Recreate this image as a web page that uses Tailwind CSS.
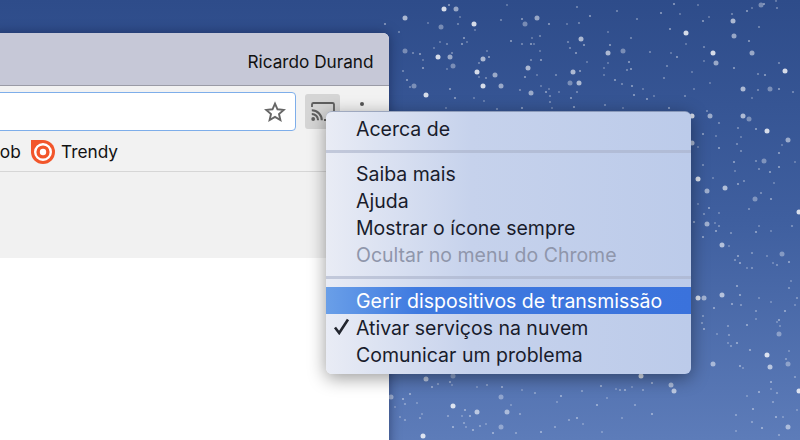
<!DOCTYPE html>
<html lang="en">
<head>
  <meta charset="UTF-8">
  <title>Cast menu</title>
  <script src="https://cdn.jsdelivr.net/npm/@tailwindcss/browser@4"></script>
</head>
<body class="font-['Inter','Liberation_Sans',sans-serif]">
  <div class="relative w-[800px] h-[440px] overflow-hidden bg-gradient-to-b from-[#2e4c8a] via-[#3f5f9f] to-[#5d7cb9]">
    <!-- wallpaper stars -->
    <svg id="stars" class="absolute inset-0 blur-[0.6px]" width="800" height="440"></svg>

    <!-- browser window -->
    <div class="absolute left-[-10px] top-[33px] w-[398.5px] h-[420px] flex flex-col rounded-t-[6px] overflow-hidden bg-white shadow-[0_0_12px_rgba(15,25,60,0.55)]">
      <div class="h-[53px] shrink-0 flex items-center justify-end pr-[15px] pt-[5px] bg-[#c6c8d7] border-b border-[#9a9ba6] text-[17.2px] text-[#111]">Ricardo Durand</div>

      <div class="h-[172px] shrink-0 flex flex-col bg-[#f2f2f2]">
        <!-- toolbar -->
        <div class="h-[47px] shrink-0 flex items-center pt-[4px]">
          <div class="w-[306px] h-[39px] flex items-center justify-end pr-[9px] bg-white border-[1.5px] border-[#7eaeea] rounded-[4px]">
            <svg width="22" height="22" viewBox="0 0 22 22" fill="none" stroke="#666" stroke-width="1.9" stroke-linejoin="miter">
              <path d="M11 2.6l2.5 5.7 6.2.6-4.7 4.1 1.4 6.1L11 15.9l-5.4 3.2L7 13 2.3 8.9l6.2-.6z"/>
            </svg>
          </div>
          <div class="w-[35px] h-[35px] ml-[9px] flex items-center justify-center bg-[#d5d5d5] rounded-[3px]">
            <svg width="24" height="19" viewBox="0 0 24 19" fill="none" stroke="#5f5f5f" stroke-width="1.8">
              <path d="M1 5V2.400A1.500 1.500 0 0 1 2.500 1h19A1.500 1.500 0 0 1 23 2.400V16.500A1.500 1.500 0 0 1 21.500 18H13"/>
              <path d="M0.800 8.300a10 10 0 0 1 10 10M0.800 12a6.300 6.300 0 0 1 6.300 6.300" stroke-width="2.100"/>
              <circle cx="2.200" cy="17" r="1.900" fill="#5f5f5f" stroke="none"/>
            </svg>
          </div>
          <div class="ml-[20px] mt-[-16px] w-[4px] h-[4px] rounded-full bg-[#555]"></div>
        </div>

        <!-- bookmarks bar -->
        <div class="h-[39px] shrink-0 flex items-center border-b border-[#d6d6d6] text-[17.3px] text-[#111]">
          <span class="w-[23px] text-right">Job</span>
          <svg class="ml-[18px]" width="24" height="24" viewBox="0 0 24 24">
            <path d="M0 0H12A12 12 0 1 1 0 12Z" fill="#f2562b"/>
            <circle cx="12" cy="12" r="7.800" fill="none" stroke="#fff" stroke-width="2.400"/>
            <circle cx="12" cy="12" r="3.200" fill="#fff"/>
          </svg>
          <span class="ml-[6px]">Trendy</span>
        </div>

        <div class="flex-1 bg-[#f1f1f1]"></div>
      </div>

      <div class="flex-1 bg-white"></div>
    </div>

    <!-- context menu -->
    <div class="absolute left-[326px] top-[111px] w-[365px] h-[263px] pt-[3px] rounded-[6px] overflow-hidden border-t border-[#3a4a70]/40 bg-gradient-to-r from-[#e9ecf5] via-[#c6d2ec] via-40% to-[#bccbea] shadow-[0_4px_18px_rgba(0,0,0,0.4)] text-[19.5px] leading-[29px] text-[#191c2c]">
      <div class="h-[27px] pl-[30px]">Acerca de</div>
      <div class="h-[18px] flex items-center"><div class="w-full h-[3px] bg-[#a9b1c8]/60"></div></div>
      <div class="h-[27px] pl-[30px]">Saiba mais</div>
      <div class="h-[27px] pl-[30px]">Ajuda</div>
      <div class="h-[27px] pl-[30px]">Mostrar o ícone sempre</div>
      <div class="h-[27px] pl-[30px] text-[#8f96ab]">Ocultar no menu do Chrome</div>
      <div class="h-[19px] flex items-center"><div class="w-full h-[3px] bg-[#a9b1c8]/60"></div></div>
      <div class="h-[27px] pl-[30px] bg-gradient-to-r from-[#6a9fe8] via-[#3f7ae0] via-25% to-[#3a72dc] text-white">Gerir dispositivos de transmissão</div>
      <div class="relative h-[27px] pl-[30px]">
        <svg class="absolute left-[7px] top-[4px]" width="18" height="17" viewBox="0 0 18 17" fill="none" stroke="#23262f" stroke-width="2.600">
          <path d="M2 9.500l4.200 5.500L15 1.500"/>
        </svg>
        Ativar serviços na nuvem
      </div>
      <div class="h-[27px] pl-[30px]">Comunicar um problema</div>
    </div>
  </div>

  <script>
    // star positions read off the wallpaper, [x, y]
    const bigStars = [[686,33],[734,36],[608,53],[623,51],[713,53],[716,63],[743,89],[770,89],[785,71],[752,53],[733,21],[761,5],[692,116],[710,116],[743,116],[749,119],
      [444,9],[456,9],[405,18],[441,27],[474,24],[537,18],[581,39],[405,51],[438,57],[450,57],[483,59],[453,66],[477,72],[495,75],[573,72],[414,86],[483,86],[501,86],[579,83],[570,83],[426,95],[531,93],[528,68],[525,24],
      [767,131],[788,140],[692,143],[764,161],[698,179],[707,191],[725,188],[755,199],[799,212],[707,224],[722,245],[782,254],
      [698,298],[704,298],[722,295],[779,334],[767,355],[713,364],[770,367],[788,364],[799,391],[788,427],
      [426,379],[453,376],[641,376],[671,385],[674,391],[501,397],[453,406],[507,412],[477,412],[501,427],[423,436],[391,397]];
    const smallStars = [[674,4],[698,5],[617,11],[661,13],[680,14],[732,14],[747,11],[752,8],[777,8],[764,4],[776,1],[637,19],[703,21],[709,17],[759,27],[670,29],[608,32],[631,38],[749,41],[686,44],[704,47],[610,45],[671,53],[650,52],[677,57],[704,61],[779,63],[629,62],[608,63],[667,66],[631,69],[604,68],[627,70],[734,68],[692,72],[758,74],[765,75],[604,75],[664,78],[615,80],[710,83],[622,84],[632,86],[694,89],[758,90],[779,89],[643,89],[793,92],[634,95],[654,96],[685,96],[647,99],[752,98],[605,105],[669,108],[623,108],[707,111],
      [449,5],[507,5],[577,7],[590,16],[460,17],[501,20],[522,19],[428,23],[458,24],[549,24],[567,24],[579,23],[385,24],[475,30],[399,32],[464,38],[532,38],[540,36],[511,41],[440,42],[447,44],[462,44],[467,42],[522,44],[531,44],[534,44],[568,42],[584,45],[434,48],[570,48],[576,53],[540,51],[413,53],[420,54],[487,51],[452,53],[489,57],[423,60],[531,60],[541,60],[587,62],[479,63],[423,68],[447,69],[403,71],[580,71],[479,77],[486,78],[525,77],[537,75],[556,75],[407,80],[541,86],[410,87],[450,89],[549,89],[520,90],[546,92],[559,92],[577,92],[455,98],[474,98],[550,96],[571,98],[484,101],[550,102],[574,107],[446,108],[497,109],[522,108],[552,108],
      [719,123],[703,134],[716,136],[738,128],[756,129],[741,137],[737,144],[719,148],[698,147],[741,151],[779,153],[782,145],[756,161],[734,162],[795,162],[703,165],[779,167],[735,171],[759,169],[770,172],[713,178],[744,181],[738,184],[774,183],[761,193],[771,199],[698,204],[749,209],[709,208],[719,213],[704,214],[694,222],[715,223],[719,226],[716,231],[759,226],[792,226],[756,232],[771,231],[731,233],[703,237],[729,246],[752,253],[738,256],[767,256],[735,260],[740,263],[773,263],[777,265],[789,262],[747,268],[752,268],
      [737,286],[791,281],[789,288],[740,295],[759,298],[797,298],[732,304],[771,302],[741,305],[714,308],[795,305],[756,311],[785,311],[756,319],[703,316],[779,320],[777,322],[702,323],[747,325],[780,326],[728,326],[704,329],[717,334],[729,335],[737,343],[728,343],[731,346],[750,350],[789,351],[786,359],[740,366],[743,368],[795,377],[771,382],[771,389],[777,393],[759,392],[747,396],[773,402],[753,409],[797,410],[736,415],[776,417],[783,417],[752,422],[762,428],[736,431],[779,435],
      [450,382],[452,385],[438,384],[432,387],[477,387],[487,385],[502,387],[522,390],[535,393],[561,396],[557,402],[582,391],[601,386],[616,389],[620,390],[625,390],[632,387],[643,390],[652,383],[607,398],[635,405],[597,405],[511,405],[520,414],[652,414],[622,418],[569,420],[577,418],[583,424],[555,427],[541,432],[602,432],[516,433],[493,433],[486,424],[480,426],[473,430],[466,427],[464,423],[470,416],[462,416],[448,416],[465,410],[422,414],[420,418],[453,427],[400,417],[405,420],[410,394],[417,403],[405,404],[403,399],[395,407]];

    const svg = document.getElementById("stars");
    const circle = (x, y, r, o) => `<circle cx="${x}" cy="${y}" r="${r}" fill="#fff" opacity="${o}"/>`;
    let marks = "";
    // brightness varies a little so the field does not look stamped
    bigStars.forEach(([x, y], i) => { marks += circle(x, y, 2.5, [0.8, 0.5, 0.6, 0.35][i % 4]); });
    smallStars.forEach(([x, y], i) => { marks += circle(x, y, 1.1, [0.45, 0.28, 0.35][i % 3]); });
    svg.innerHTML = marks;
  </script>
</body>
</html>
